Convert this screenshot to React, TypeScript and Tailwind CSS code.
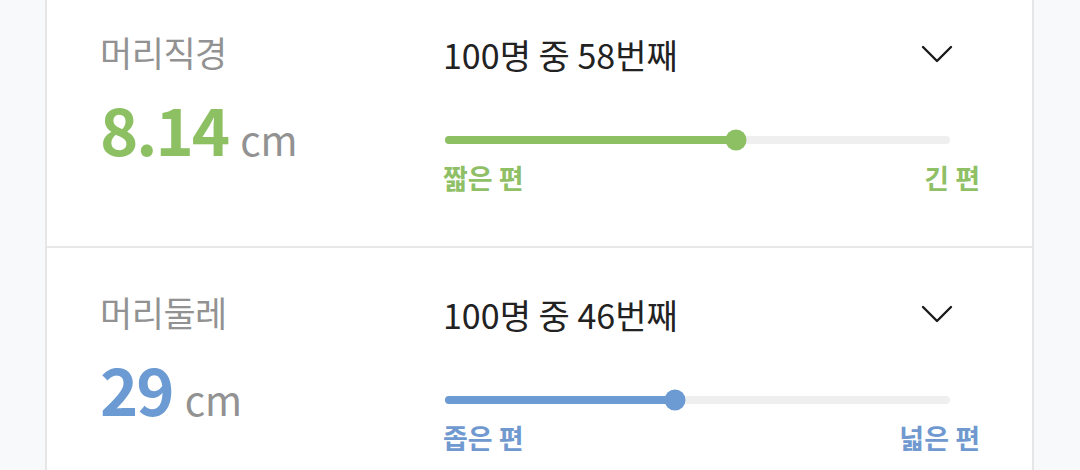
type Measure = {
  label: string
  value: string
  rank: number
  total: number
  low: string
  high: string
  tone: 'green' | 'blue'
}

const measures: Measure[] = [
  { label: '머리직경', value: '8.14', rank: 58, total: 100, low: '짧은 편', high: '긴 편', tone: 'green' },
  { label: '머리둘레', value: '29', rank: 46, total: 100, low: '좁은 편', high: '넓은 편', tone: 'blue' },
]

const tones = {
  green: { value: 'text-[#8cc063]', fill: 'bg-[#8cc063]', side: 'text-[#8fc066]' },
  blue: { value: 'text-[#6b9bd2]', fill: 'bg-[#6b9bd2]', side: 'text-[#7099cf]' },
}

function Chevron() {
  return (
    <svg width="34" height="20" viewBox="0 0 34 20" fill="none" className="text-[#1a1a1a]">
      <polyline points="3,3 17,17 31,3" stroke="currentColor" strokeWidth="2.4" strokeLinecap="round" strokeLinejoin="round" />
    </svg>
  )
}

function RankSlider({ rank, total, tone }: { rank: number; total: number; tone: Measure['tone'] }) {
  const pct = ((rank - 1) / (total - 1)) * 100
  return (
    <div className="relative h-[8px] mr-[30px] ml-[2px] rounded-full bg-[#efefef]">
      <div className={`h-full rounded-full ${tones[tone].fill}`} style={{ width: `${pct}%` }} />
      <div
        className={`absolute top-1/2 w-[21px] h-[21px] -translate-x-1/2 -translate-y-1/2 rounded-full ${tones[tone].fill}`}
        style={{ left: `${pct}%` }}
      />
    </div>
  )
}

function MeasureRow({ m }: { m: Measure }) {
  const t = tones[m.tone]
  return (
    <div className="flex h-[260px] pl-[53px] pr-[52px] pt-[40px] border-b-2 border-[#e8e8e8] last:border-b-0">
      <div className="w-[343px] shrink-0">
        <p className="text-[35px] leading-[48px] text-[#929292] tracking-[-0.5px]">{m.label}</p>
        <p className="mt-[14px] flex items-baseline leading-[76px]">
          <span className={`text-[65px] font-bold tracking-[-2px] ${t.value}`}>{m.value}</span>
          <span className="ml-[12px] text-[40px] text-[#929292]">cm</span>
        </p>
      </div>
      <div className="flex-1 min-w-0">
        <div className="flex items-center justify-between h-[48px] mt-[2px] pr-[26px]">
          <p className="text-[34px] text-[#222222]">
            {m.total}명 중 {m.rank}번째
          </p>
          <Chevron />
        </div>
        <div className="mt-[58px]">
          <RankSlider rank={m.rank} total={m.total} tone={m.tone} />
        </div>
        <div className={`mt-[16px] flex justify-between text-[27px] font-bold leading-[36px] ${t.side}`}>
          <span>{m.low}</span>
          <span>{m.high}</span>
        </div>
      </div>
    </div>
  )
}

export default function App() {
  return (
    <div
      className="flex h-[470px] w-[1080px] overflow-hidden bg-[#f7f9fb]"
      style={{ fontFamily: '"Noto Sans CJK KR", "Noto Sans", sans-serif' }}
    >
      <div className="w-[45px] shrink-0" />
      <div className="flex-1 bg-white border-x-2 border-[#e6e6e6]">
        <div className="-mt-[12px]">
          {measures.map((m) => (
            <MeasureRow key={m.label} m={m} />
          ))}
        </div>
      </div>
      <div className="w-[46px] shrink-0" />
    </div>
  )
}
